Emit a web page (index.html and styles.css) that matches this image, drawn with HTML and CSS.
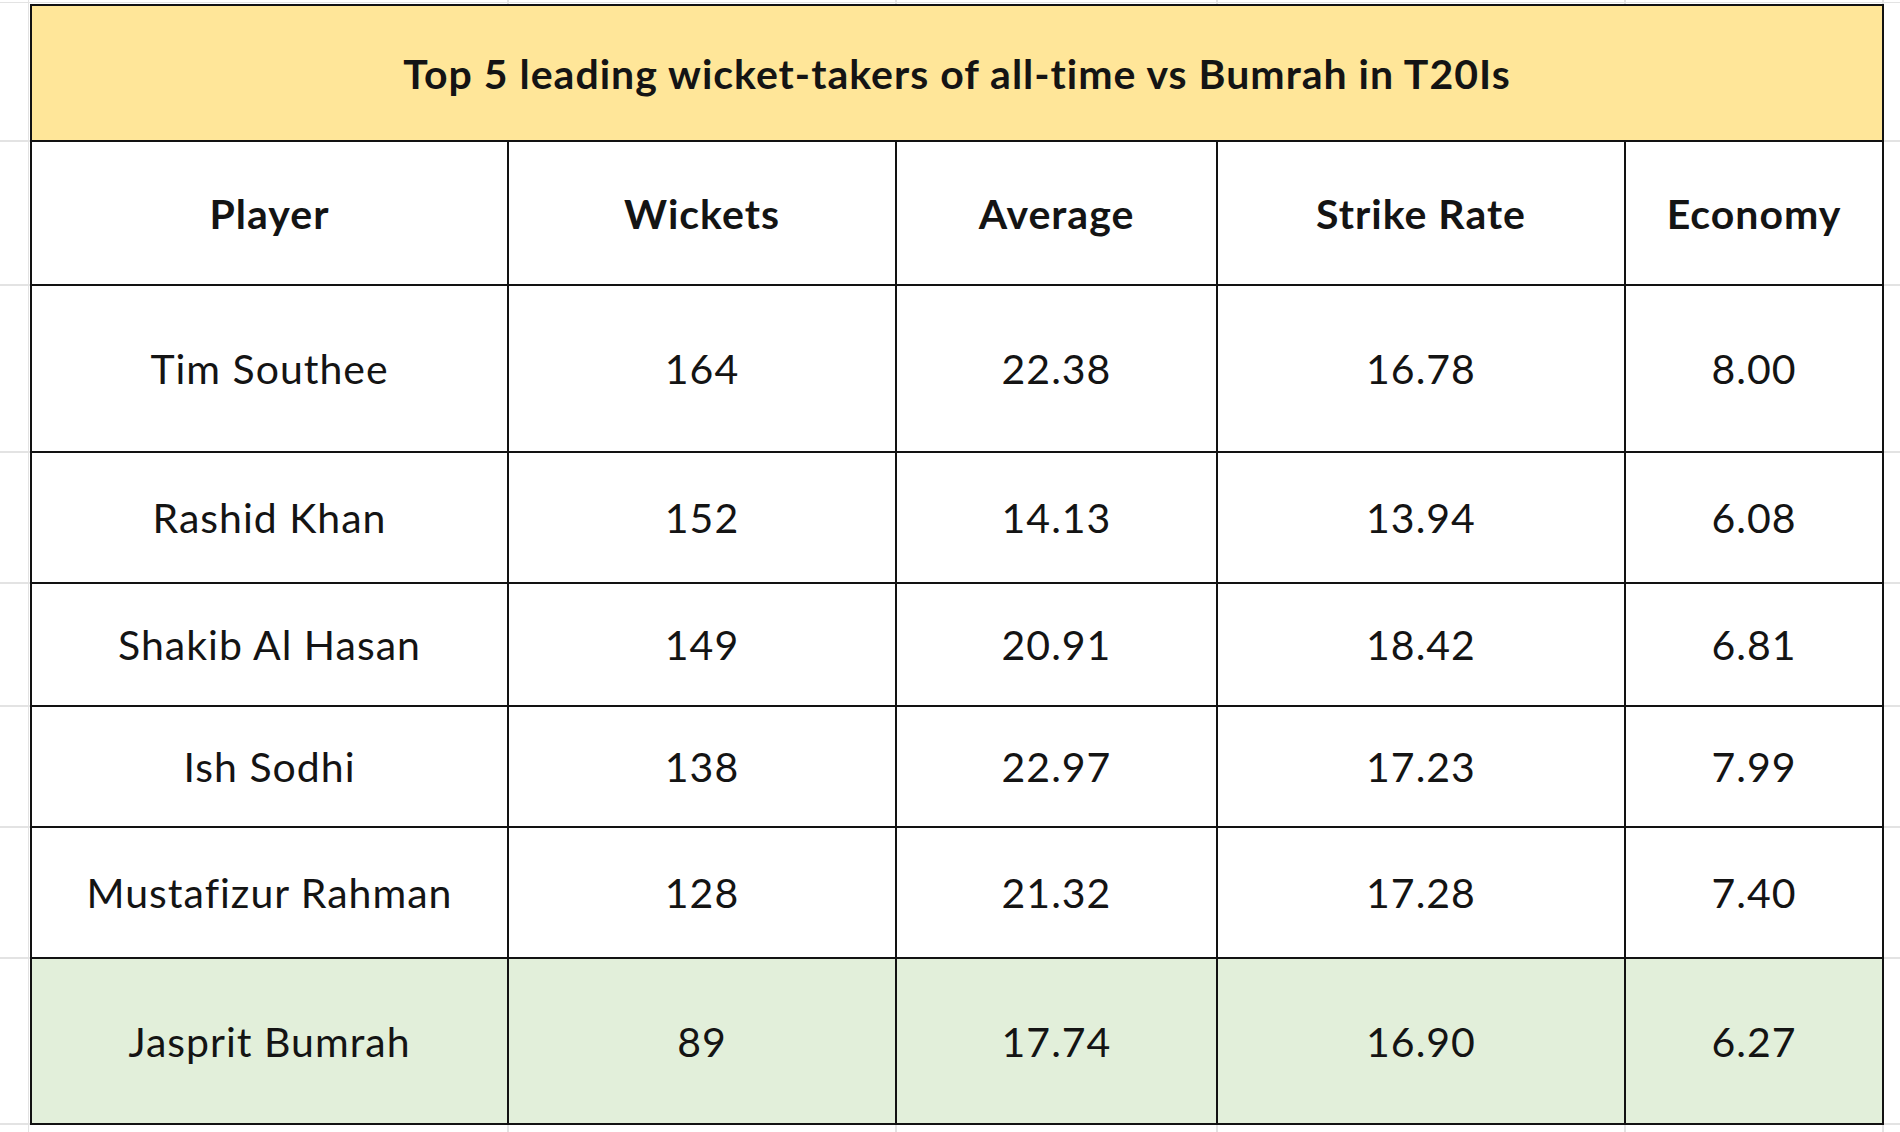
FILE: index.html
```html
<!DOCTYPE html>
<html lang="en">
<head>
<meta charset="utf-8">
<title>Top 5 leading wicket-takers of all-time vs Bumrah in T20Is</title>
<link rel="stylesheet" href="styles.css">
</head>
<body>
<div class="sheet">
  <div class="stats">
    <div class="cell title">Top 5 leading wicket-takers of all-time vs Bumrah in T20Is</div>

    <div class="cell head">Player</div>
    <div class="cell head">Wickets</div>
    <div class="cell head">Average</div>
    <div class="cell head">Strike Rate</div>
    <div class="cell head">Economy</div>

    <div class="cell">Tim Southee</div>
    <div class="cell">164</div>
    <div class="cell">22.38</div>
    <div class="cell">16.78</div>
    <div class="cell">8.00</div>

    <div class="cell">Rashid Khan</div>
    <div class="cell">152</div>
    <div class="cell">14.13</div>
    <div class="cell">13.94</div>
    <div class="cell">6.08</div>

    <div class="cell">Shakib Al Hasan</div>
    <div class="cell">149</div>
    <div class="cell">20.91</div>
    <div class="cell">18.42</div>
    <div class="cell">6.81</div>

    <div class="cell">Ish Sodhi</div>
    <div class="cell">138</div>
    <div class="cell">22.97</div>
    <div class="cell">17.23</div>
    <div class="cell">7.99</div>

    <div class="cell">Mustafizur Rahman</div>
    <div class="cell">128</div>
    <div class="cell">21.32</div>
    <div class="cell">17.28</div>
    <div class="cell">7.40</div>

    <div class="cell hl">Jasprit Bumrah</div>
    <div class="cell hl">89</div>
    <div class="cell hl">17.74</div>
    <div class="cell hl">16.90</div>
    <div class="cell hl">6.27</div>
  </div>
</div>
</body>
</html>
```

FILE: styles.css
```css
html, body {
  margin: 0;
  padding: 0;
}

body {
  width: 1900px;
  height: 1132px;
  overflow: hidden;
  background-color: #ffffff;
  background-repeat: no-repeat;
  background-image:
    linear-gradient(#e3e3e3, #e3e3e3),
    linear-gradient(#e3e3e3, #e3e3e3),
    linear-gradient(#e3e3e3, #e3e3e3),
    linear-gradient(#e3e3e3, #e3e3e3),
    linear-gradient(#e3e3e3, #e3e3e3),
    linear-gradient(#e3e3e3, #e3e3e3),
    linear-gradient(#e3e3e3, #e3e3e3),
    linear-gradient(#e3e3e3, #e3e3e3),
    linear-gradient(#e3e3e3, #e3e3e3),
    linear-gradient(#e3e3e3, #e3e3e3),
    linear-gradient(#e3e3e3, #e3e3e3),
    linear-gradient(#e3e3e3, #e3e3e3),
    linear-gradient(#e3e3e3, #e3e3e3),
    linear-gradient(#e3e3e3, #e3e3e3),
    linear-gradient(#e3e3e3, #e3e3e3);
  background-size:
    100% 2px, 100% 2px, 100% 2px, 100% 2px, 100% 2px, 100% 2px, 100% 2px, 100% 2px, 100% 1px,
    2px 100%, 2px 100%, 2px 100%, 2px 100%, 2px 100%, 1px 100%;
  background-position:
    0 140px, 0 284px, 0 451px, 0 582px, 0 705px, 0 826px, 0 957px, 0 1123px, 0 2px,
    507px 0, 895px 0, 1216px 0, 1624px 0, 1882px 0, 28px 0;
}

.sheet {
  padding: 4px 0 0 30px;
}

.stats {
  display: grid;
  grid-template-columns: 477px 388px 321px 408px 258px;
  grid-template-rows: 136px 144px 167px 131px 123px 121px 131px 166px;
  width: max-content;
  border-left: 2px solid #121212;
  border-top: 2px solid #121212;
  font-family: "Lato", "Open Sans", sans-serif;
  font-size: 41px;
  letter-spacing: 1px;
  color: #141414;
}

.cell {
  display: flex;
  align-items: center;
  justify-content: center;
  background: #ffffff;
  border-right: 2px solid #121212;
  border-bottom: 2px solid #121212;
  white-space: nowrap;
}

.title {
  grid-column: 1 / -1;
  background: #ffe699;
  font-weight: 700;
}

.head {
  font-weight: 700;
}

.hl {
  background: #e2efda;
}
```
